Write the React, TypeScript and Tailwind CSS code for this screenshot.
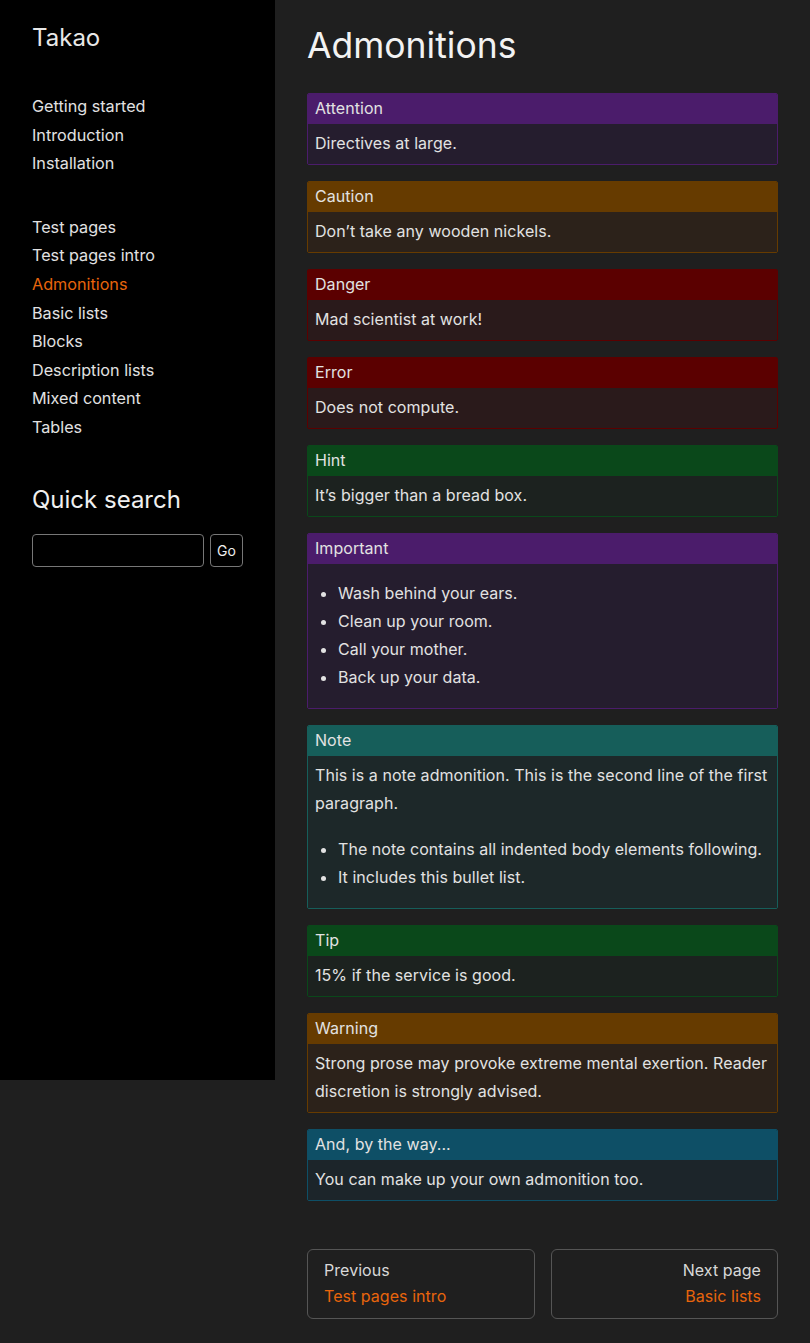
import React from 'react';

type Kind = {
    title: string;
    head: string;
    body: string;
    border: string;
    content: React.ReactNode;
};

const boxes: Kind[] = [
    {
        title: 'Attention',
        head: 'bg-[#4b1c6b]',
        body: 'bg-[#251d2e]',
        border: 'border-[#4b1c6b]',
        content: <p className="pt-[5px] pb-[7px]">Directives at large.</p>,
    },
    {
        title: 'Caution',
        head: 'bg-[#663b00]',
        body: 'bg-[#2c221a]',
        border: 'border-[#663b00]',
        content: <p className="pt-[5px] pb-[7px]">Don’t take any wooden nickels.</p>,
    },
    {
        title: 'Danger',
        head: 'bg-[#5b0000]',
        body: 'bg-[#2a1a1b]',
        border: 'border-[#5b0000]',
        content: <p className="pt-[5px] pb-[7px]">Mad scientist at work!</p>,
    },
    {
        title: 'Error',
        head: 'bg-[#5b0000]',
        body: 'bg-[#2a1a1b]',
        border: 'border-[#5b0000]',
        content: <p className="pt-[5px] pb-[7px]">Does not compute.</p>,
    },
    {
        title: 'Hint',
        head: 'bg-[#0a481a]',
        body: 'bg-[#1c221f]',
        border: 'border-[#0a481a]',
        content: <p className="pt-[5px] pb-[7px]">It’s bigger than a bread box.</p>,
    },
    {
        title: 'Important',
        head: 'bg-[#4b1c6b]',
        body: 'bg-[#251d2e]',
        border: 'border-[#4b1c6b]',
        content: (
            <ul className="list-disc pl-[23px] pt-[15px] pb-[17px]">
                <li>Wash behind your ears.</li>
                <li>Clean up your room.</li>
                <li>Call your mother.</li>
                <li>Back up your data.</li>
            </ul>
        ),
    },
    {
        title: 'Note',
        head: 'bg-[#165e5a]',
        body: 'bg-[#1d2829]',
        border: 'border-[#165e5a]',
        content: (
            <div className="pt-[5px] pb-[17px]">
                <p>This is a note admonition. This is the second line of the first paragraph.</p>
                <ul className="list-disc pl-[23px] mt-[18px]">
                    <li>The note contains all indented body elements following.</li>
                    <li>It includes this bullet list.</li>
                </ul>
            </div>
        ),
    },
    {
        title: 'Tip',
        head: 'bg-[#0a481a]',
        body: 'bg-[#1c221f]',
        border: 'border-[#0a481a]',
        content: <p className="pt-[5px] pb-[7px]">15% if the service is good.</p>,
    },
    {
        title: 'Warning',
        head: 'bg-[#663b00]',
        body: 'bg-[#2c221a]',
        border: 'border-[#663b00]',
        content: (
            <p className="pt-[5px] pb-[7px]">
                Strong prose may provoke extreme mental exertion. Reader discretion is strongly advised.
            </p>
        ),
    },
    {
        title: 'And, by the way...',
        head: 'bg-[#0e4f66]',
        body: 'bg-[#1c252a]',
        border: 'border-[#0e4f66]',
        content: <p className="pt-[5px] pb-[7px]">You can make up your own admonition too.</p>,
    },
];

const navGroups = [
    ['Getting started', 'Introduction', 'Installation'],
    ['Test pages', 'Test pages intro', 'Admonitions', 'Basic lists', 'Blocks', 'Description lists', 'Mixed content', 'Tables'],
];

export default function App() {
    return (
        <div
            className="min-h-screen flex items-start bg-[#1f1f1f] text-[#e2e2e2] text-[16px]"
            style={{ fontFamily: 'Inter, "Noto Sans", sans-serif' }}
        >
            {/* sidebar */}
            <aside className="w-[275px] shrink-0 h-[1080px] bg-black pl-[32px] pr-[32px] pt-[22px]">
                <div className="text-[24px] leading-[32px] text-[#e8e8e8]">Takao</div>

                <nav className="mt-[38px] text-[16.2px] leading-[28.6px]">
                    {navGroups.map((group, gi) => (
                        <ul key={gi} className={gi > 0 ? 'mt-[35px]' : ''}>
                            {group.map((item) => (
                                <li
                                    key={item}
                                    className={item === 'Admonitions' ? 'text-[#e8650c]' : 'text-[#e2e2e2]'}
                                >
                                    {item}
                                </li>
                            ))}
                        </ul>
                    ))}
                </nav>

                <h3 className="mt-[42px] text-[24px] leading-[32px] text-[#f0f0f0]">Quick search</h3>
                <form className="mt-[18px] flex gap-[6px]" onSubmit={(e) => e.preventDefault()}>
                    <input
                        type="text"
                        className="w-[172px] h-[33px] rounded-[4px] border border-[#777] bg-black px-2 text-sm outline-none"
                    />
                    <button
                        type="submit"
                        className="w-[33px] h-[33px] rounded-[4px] border border-[#777] bg-black text-[14px] text-[#eee]"
                    >
                        Go
                    </button>
                </form>
            </aside>

            {/* main content */}
            <main className="flex-1 min-w-0 px-[32px] pt-[24px] pb-[24px] tracking-[0.05px]">
                <h1 className="text-[35.5px] leading-[44px] text-[#f2f2f2] mb-[25px] tracking-normal">Admonitions</h1>

                <div className="flex flex-col gap-[16px] leading-[28px]">
                    {boxes.map((b) => (
                        <div key={b.title} className={`border ${b.border} rounded-[2px] overflow-hidden`}>
                            <div className={`${b.head} px-[7px] leading-[28px] pb-[2px]`}>{b.title}</div>
                            <div className={`${b.body} px-[7px]`}>{b.content}</div>
                        </div>
                    ))}
                </div>

                <div className="mt-[48px] grid grid-cols-2 gap-[16px]">
                    <a className="block h-[70px] rounded-[6px] border border-[#555] px-[16px] pt-[7px] leading-[26px]">
                        <div className="text-[#d8d8d8]">Previous</div>
                        <div className="text-[#e8650c]">Test pages intro</div>
                    </a>
                    <a className="block h-[70px] rounded-[6px] border border-[#555] px-[16px] pt-[7px] leading-[26px] text-right">
                        <div className="text-[#d8d8d8]">Next page</div>
                        <div className="text-[#e8650c]">Basic lists</div>
                    </a>
                </div>
            </main>
        </div>
    );
}
